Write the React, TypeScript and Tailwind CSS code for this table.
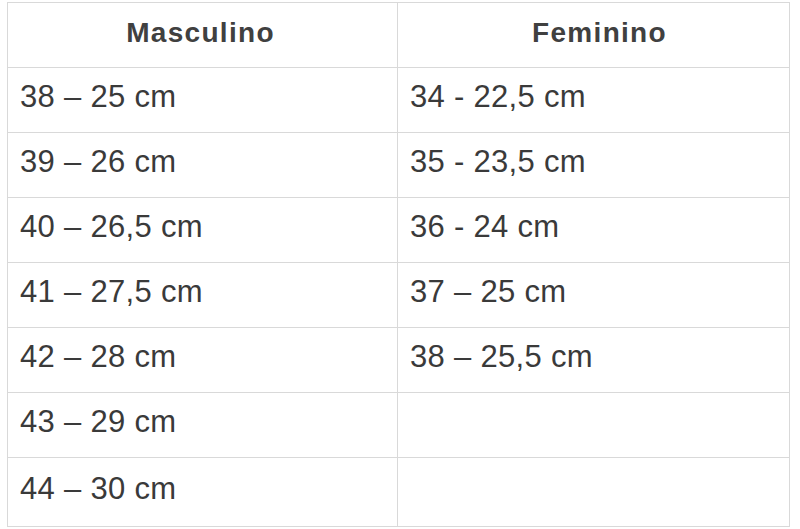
const rows: [string, string][] = [
  ["38 – 25 cm", "34 - 22,5 cm"],
  ["39 – 26 cm", "35 - 23,5 cm"],
  ["40 – 26,5 cm", "36 - 24 cm"],
  ["41 – 27,5 cm", "37 – 25 cm"],
  ["42 – 28 cm", "38 – 25,5 cm"],
  ["43 – 29 cm", ""],
  ["44 – 30 cm", ""],
];

export default function App() {
  return (
    <main
      className="min-h-[529px] w-[800px] bg-white pt-[2px] pl-[7px]"
      style={{ fontFamily: '"Liberation Sans", Arial, sans-serif' }}
    >
      <div className="w-[783px] border border-[#d9d9d9] text-[#3a3a3a]">
        <div className="flex h-[65px] border-b border-[#d9d9d9] text-[#404040]">
          <div className="flex w-[390px] items-center justify-center border-r border-[#d9d9d9] pb-[4px] pr-[4px] text-[28px] font-bold tracking-[1.3px]">
            Masculino
          </div>
          <div className="flex flex-1 items-center justify-center pb-[4px] pl-[12px] text-[28px] font-bold tracking-[1.3px]">
            Feminino
          </div>
        </div>
        {rows.map((row, index) => (
          <div
            key={index}
            className={
              index === rows.length - 1
                ? "flex h-[68px]"
                : "flex h-[65px] border-b border-[#d9d9d9]"
            }
          >
            <div className="flex w-[390px] items-center border-r border-[#d9d9d9] pb-[5px] pl-[12px] text-[31px] tracking-[0.3px]">
              {row[0]}
            </div>
            <div className="flex flex-1 items-center pb-[5px] pl-[12px] text-[31px] tracking-[0.3px]">
              {row[1]}
            </div>
          </div>
        ))}
      </div>
    </main>
  );
}
